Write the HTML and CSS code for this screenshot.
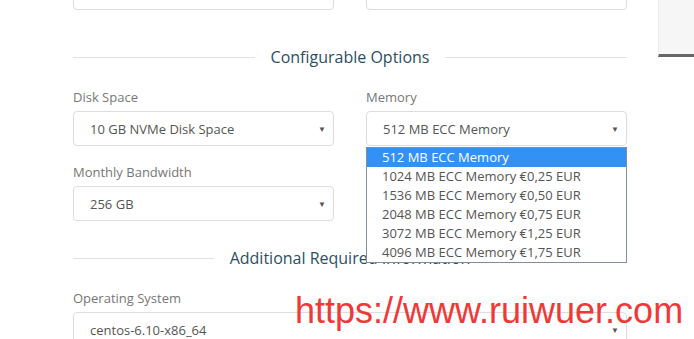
FILE: index.html
```html
<!DOCTYPE html>
<html lang="en">
<head>
    <meta charset="UTF-8">
    <meta name="viewport" content="width=device-width, initial-scale=1.0">
    <title>Configure Product</title>
    <link rel="stylesheet" href="styles.css">
</head>
<body>
    <div class="page">
        <div class="main">
            <div class="field-row top-row">
                <div class="field-box"></div>
                <div class="field-box"></div>
            </div>

            <div class="sub-heading first">
                <span>Configurable Options</span>
            </div>

            <div class="field-row">
                <div class="form-group">
                    <label>Disk Space</label>
                    <div class="select">
                        <span>10 GB NVMe Disk Space</span>
                        <span class="caret">▼</span>
                    </div>
                </div>
                <div class="form-group">
                    <label>Memory</label>
                    <div class="select-wrap">
                        <div class="select">
                            <span>512 MB ECC Memory</span>
                            <span class="caret">▼</span>
                        </div>
                        <ul class="dropdown">
                            <li class="selected">512 MB ECC Memory</li>
                            <li>1024 MB ECC Memory €0,25 EUR</li>
                            <li>1536 MB ECC Memory €0,50 EUR</li>
                            <li>2048 MB ECC Memory €0,75 EUR</li>
                            <li>3072 MB ECC Memory €1,25 EUR</li>
                            <li>4096 MB ECC Memory €1,75 EUR</li>
                        </ul>
                    </div>
                </div>
                <div class="form-group">
                    <label>Monthly Bandwidth</label>
                    <div class="select">
                        <span>256 GB</span>
                        <span class="caret">▼</span>
                    </div>
                </div>
                <!-- hidden behind the open dropdown -->
                <div class="form-group">
                    <label></label>
                    <div class="select"></div>
                </div>
            </div>

            <div class="sub-heading second">
                <span>Additional Required Information</span>
            </div>

            <div class="form-group wide">
                <label>Operating System</label>
                <div class="select">
                    <span>centos-6.10-x86_64</span>
                    <span class="caret">▼</span>
                </div>
            </div>
        </div>

        <div class="sidebar"></div>
    </div>

    <div class="watermark">https://www.ruiwuer.com</div>
</body>
</html>
```

FILE: styles.css
```css
* {
    margin: 0;
    padding: 0;
    box-sizing: border-box;
}

body {
    font-family: 'Open Sans', 'Noto Sans', sans-serif;
    background: #fff;
    color: #555;
    overflow: hidden;
}

.page {
    display: flex;
    align-items: flex-start;
}

.main {
    width: 658px;
    padding: 0 31px 0 73px;
    flex-shrink: 0;
}

.sidebar {
    flex: 1;
    height: 57px;
    background: #f6f6f6;
    border-left: 1px solid #ececec;
    border-bottom: 3px solid #666;
}

.field-row {
    display: grid;
    grid-template-columns: 261px 261px;
    column-gap: 32px;
}

.top-row {
    margin-top: -25px;
}

.field-box {
    height: 35px;
    border: 1px solid #ddd;
    border-radius: 4px;
}

.sub-heading {
    display: flex;
    align-items: center;
    gap: 16px;
    height: 24px;
    margin: 35px 0 18px;
    font-size: 16px;
    color: #2c4f5f;
    white-space: nowrap;
}

.sub-heading::before,
.sub-heading::after {
    content: '';
    flex: 1;
    height: 1px;
    background: #e2e2e2;
}

.sub-heading.second {
    margin-top: 25px;
}

.form-group label {
    display: block;
    height: 20px;
    line-height: 20px;
    margin-bottom: 4px;
    font-size: 13px;
    color: #777;
}

.form-group {
    margin-bottom: 16px;
}

.field-row .form-group:nth-last-child(-n+2) {
    margin-bottom: 0;
}

.select {
    height: 35px;
    border: 1px solid #ddd;
    border-radius: 4px;
    display: flex;
    align-items: center;
    justify-content: space-between;
    padding: 0 7px 0 16px;
    font-size: 13px;
    color: #555;
    background: #fff;
}

.caret {
    font-size: 8px;
    color: #555;
}

.select-wrap {
    position: relative;
}

.dropdown {
    position: absolute;
    top: 36px;
    left: 0;
    width: 261px;
    list-style: none;
    background: #fff;
    border: 1px solid #7f8fa0;
    z-index: 5;
}

.dropdown li {
    height: 19px;
    line-height: 19px;
    padding-left: 15px;
    font-size: 13px;
    color: #555;
}

.dropdown li.selected {
    background: #3390f5;
    color: #fff;
}

.watermark {
    position: absolute;
    left: 295px;
    top: 289px;
    font-family: 'Liberation Sans', Arial, sans-serif;
    font-size: 36px;
    line-height: 44px;
    color: #f03838;
    z-index: 10;
}
```
